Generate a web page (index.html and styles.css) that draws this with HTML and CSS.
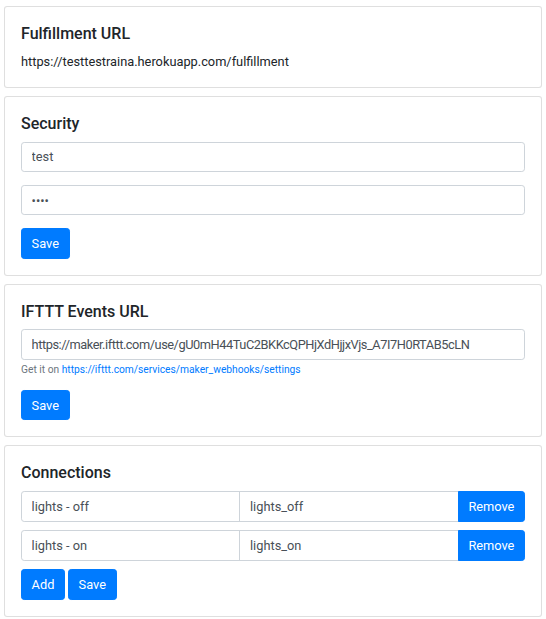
FILE: index.html
```html
<!DOCTYPE html>
<html lang="en">
<head>
<meta charset="utf-8">
<title>Settings</title>
<link rel="stylesheet" href="styles.css">
</head>
<body>
<div class="page">
  <section class="card">
    <h5 class="card-title">Fulfillment URL</h5>
    <p class="card-text">https://testtestraina.herokuapp.com/fulfillment</p>
  </section>

  <section class="card">
    <h5 class="card-title">Security</h5>
    <div class="form-group"><input class="form-control" type="text" value="test"></div>
    <div class="form-group"><input class="form-control" type="password" value="test"></div>
    <div class="btn-row"><button class="btn">Save</button></div>
  </section>

  <section class="card">
    <h5 class="card-title">IFTTT Events URL</h5>
    <div class="form-group">
      <input class="form-control url-input" type="text" value="https://maker.ifttt.com/use/gU0mH44TuC2BKKcQPHjXdHjjxVjs_A7I7H0RTAB5cLN">
      <small class="help">Get it on <a href="#">https://ifttt.com/services/maker_webhooks/settings</a></small>
    </div>
    <div class="btn-row"><button class="btn">Save</button></div>
  </section>

  <section class="card">
    <h5 class="card-title">Connections</h5>
    <div class="input-group">
      <input class="form-control" type="text" value="lights - off">
      <input class="form-control" type="text" value="lights_off">
      <button class="btn btn-append">Remove</button>
    </div>
    <div class="input-group">
      <input class="form-control" type="text" value="lights - on">
      <input class="form-control" type="text" value="lights_on">
      <button class="btn btn-append">Remove</button>
    </div>
    <div class="btn-row"><button class="btn">Add</button><button class="btn">Save</button></div>
  </section>
</div>
</body>
</html>
```

FILE: styles.css
```css
html { font-size: 12.8px; }
body {
  margin: 0;
  background: #fff;
  color: #212529;
  font-family: Roboto, "Noto Sans", "Liberation Sans", sans-serif;
  font-size: 1rem;
  line-height: 1.5;
}
.page {
  padding: 6px 4px 0 4px;
  display: flex;
  flex-direction: column;
  gap: 8px;
}
.card {
  border: 1px solid rgba(0,0,0,.125);
  border-radius: 3.2px;
  padding: 16px;
  background: #fff;
}
.card-title {
  margin: 1px 0 8.6px 0;
  font-size: 16px;
  font-weight: 500;
  line-height: 1.2;
}
.card-text { margin: 0; }
.form-group { margin-bottom: 12.8px; display: flex; flex-direction: column; }
.form-control {
  box-sizing: border-box;
  display: block;
  width: 100%;
  height: 30.4px;
  padding: 4.8px 9.6px;
  font-family: inherit;
  font-size: 12.8px;
  line-height: 1.5;
  color: #495057;
  background: #fff;
  border: 1px solid #ced4da;
  border-radius: 3.2px;
  margin: 0;
}
.url-input { letter-spacing: -0.45px; }
.help {
  margin-top: 3.2px;
  font-size: 10.24px;
  line-height: 1.4;
  color: #6c757d;
}
.help a { color: #007bff; text-decoration: none; }
.btn-row { display: flex; gap: 3px; }
.btn {
  font-family: inherit;
  font-size: 12.8px;
  line-height: 1.5;
  height: 30.4px;
  padding: 4.8px 9.6px;
  color: #fff;
  background: #007bff;
  border: 1px solid #007bff;
  border-radius: 3.2px;
  margin: 0;
}
.input-group {
  display: flex;
  margin-bottom: 8.6px;
}
.input-group .form-control {
  flex: 1 1 0;
  min-width: 0;
}
.input-group .form-control:first-child { border-radius: 3.2px 0 0 3.2px; }
.input-group .form-control + .form-control { margin-left: -1px; border-radius: 0; }
.btn-append { border-radius: 0 3.2px 3.2px 0; margin-left: -1px; flex: none; }
```
